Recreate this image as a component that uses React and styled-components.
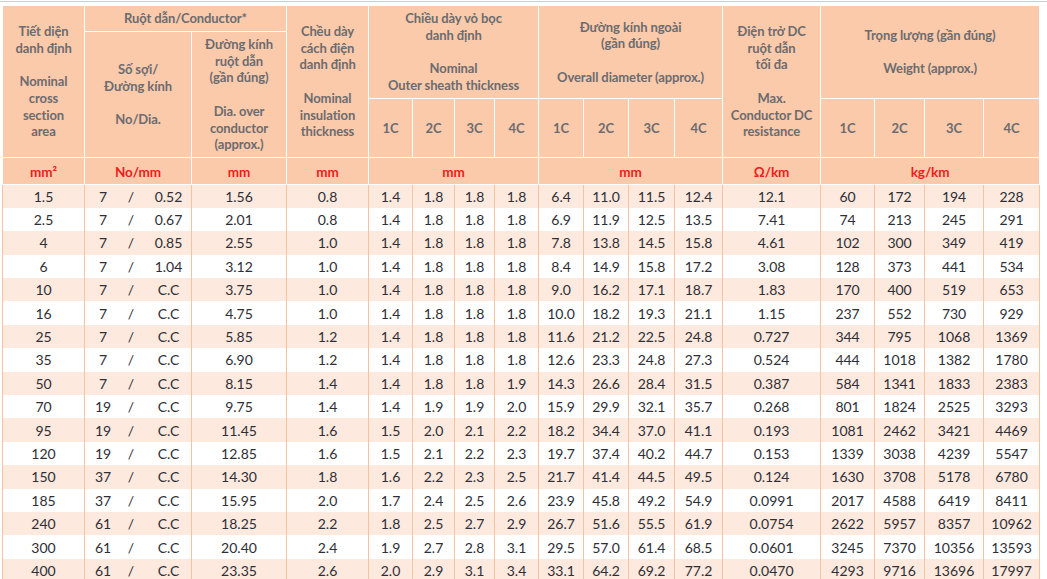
import React from 'react';
import styled, { createGlobalStyle } from 'styled-components';

const GlobalStyle = createGlobalStyle`
  html, body { margin: 0; padding: 0; background: #ffffff; }
  body { font-family: Lato, "Open Sans", "Noto Sans", sans-serif; }
`;

const Page = styled.div`
  width: 1047px;
  height: 579px;
  overflow: hidden;
`;

const TopRule = styled.div`
  height: 1px;
  margin-top: 1px;
  background: #cfcfcf;
`;

const Table = styled.table`
  margin: 3px 0 0 2px;
  border-collapse: collapse;
  table-layout: fixed;
  width: 1038px;
`;

const HeadRow = styled.tr`
  height: ${(p) => p.$h}px;
`;

const Th = styled.th`
  background: #fbcaaa;
  color: #6b6c70;
  font-weight: 700;
  font-size: 13px;
  line-height: 16.7px;
  text-align: center;
  vertical-align: middle;
  border: 1px solid #ffffff;
  padding: 0 2px;
  letter-spacing: -0.1px;
`;

const UnitTh = styled(Th)`
  color: #f01c1c;
  font-size: 13.5px;
  padding-top: 2px;
`;

const BodyRow = styled.tr`
  height: 23.4px;
  background: ${(p) => (p.$shade ? '#fde9dd' : '#ffffff')};
`;

const Td = styled.td`
  padding: 1px 0 0;
  text-align: center;
  vertical-align: middle;
  color: #2e2e36;
  font-size: 14px;
  line-height: 16px;
  border-left: 1px solid #f7c2a0;
  border-right: 1px solid #f7c2a0;
`;

const Pair = styled.div`
  display: grid;
  grid-template-columns: 36px 20px 1fr;
  align-items: center;
`;

const PairPart = styled.span`
  text-align: center;
  padding-left: ${(p) => p.$pad || 0}px;
`;

const widths = [82, 107, 95, 82, 44, 42, 40, 44, 45, 45, 46, 48, 98, 54, 50, 59, 56];

const rows = [
  ['1.5', '7', '0.52', '1.56', '0.8', '1.4', '1.8', '1.8', '1.8', '6.4', '11.0', '11.5', '12.4', '12.1', '60', '172', '194', '228'],
  ['2.5', '7', '0.67', '2.01', '0.8', '1.4', '1.8', '1.8', '1.8', '6.9', '11.9', '12.5', '13.5', '7.41', '74', '213', '245', '291'],
  ['4', '7', '0.85', '2.55', '1.0', '1.4', '1.8', '1.8', '1.8', '7.8', '13.8', '14.5', '15.8', '4.61', '102', '300', '349', '419'],
  ['6', '7', '1.04', '3.12', '1.0', '1.4', '1.8', '1.8', '1.8', '8.4', '14.9', '15.8', '17.2', '3.08', '128', '373', '441', '534'],
  ['10', '7', 'C.C', '3.75', '1.0', '1.4', '1.8', '1.8', '1.8', '9.0', '16.2', '17.1', '18.7', '1.83', '170', '400', '519', '653'],
  ['16', '7', 'C.C', '4.75', '1.0', '1.4', '1.8', '1.8', '1.8', '10.0', '18.2', '19.3', '21.1', '1.15', '237', '552', '730', '929'],
  ['25', '7', 'C.C', '5.85', '1.2', '1.4', '1.8', '1.8', '1.8', '11.6', '21.2', '22.5', '24.8', '0.727', '344', '795', '1068', '1369'],
  ['35', '7', 'C.C', '6.90', '1.2', '1.4', '1.8', '1.8', '1.8', '12.6', '23.3', '24.8', '27.3', '0.524', '444', '1018', '1382', '1780'],
  ['50', '7', 'C.C', '8.15', '1.4', '1.4', '1.8', '1.8', '1.9', '14.3', '26.6', '28.4', '31.5', '0.387', '584', '1341', '1833', '2383'],
  ['70', '19', 'C.C', '9.75', '1.4', '1.4', '1.9', '1.9', '2.0', '15.9', '29.9', '32.1', '35.7', '0.268', '801', '1824', '2525', '3293'],
  ['95', '19', 'C.C', '11.45', '1.6', '1.5', '2.0', '2.1', '2.2', '18.2', '34.4', '37.0', '41.1', '0.193', '1081', '2462', '3421', '4469'],
  ['120', '19', 'C.C', '12.85', '1.6', '1.5', '2.1', '2.2', '2.3', '19.7', '37.4', '40.2', '44.7', '0.153', '1339', '3038', '4239', '5547'],
  ['150', '37', 'C.C', '14.30', '1.8', '1.6', '2.2', '2.3', '2.5', '21.7', '41.4', '44.5', '49.5', '0.124', '1630', '3708', '5178', '6780'],
  ['185', '37', 'C.C', '15.95', '2.0', '1.7', '2.4', '2.5', '2.6', '23.9', '45.8', '49.2', '54.9', '0.0991', '2017', '4588', '6419', '8411'],
  ['240', '61', 'C.C', '18.25', '2.2', '1.8', '2.5', '2.7', '2.9', '26.7', '51.6', '55.5', '61.9', '0.0754', '2622', '5957', '8357', '10962'],
  ['300', '61', 'C.C', '20.40', '2.4', '1.9', '2.7', '2.8', '3.1', '29.5', '57.0', '61.4', '68.5', '0.0601', '3245', '7370', '10356', '13593'],
  ['400', '61', 'C.C', '23.35', '2.6', '2.0', '2.9', '3.1', '3.4', '33.1', '64.2', '69.2', '77.2', '0.0470', '4293', '9716', '13696', '17997'],
];

const cores = ['1C', '2C', '3C', '4C'];
const coreGroups = ['sheath', 'diameter', 'weight'];

export default function App() {
  return (
    <Page>
      <GlobalStyle />
      <TopRule />
      <Table>
        <colgroup>
          {widths.map((w, i) => (
            <col key={i} style={{ width: w }} />
          ))}
        </colgroup>
        <thead>
          <HeadRow $h={26}>
            <Th rowSpan={3}>
              Tiết diện<br />danh định<br /><br />Nominal<br />cross<br />section<br />area
            </Th>
            <Th colSpan={2}>Ruột dẫn/Conductor*</Th>
            <Th rowSpan={3}>
              Chều dày<br />cách điện<br />danh định<br /><br />Nominal<br />insulation<br />thickness
            </Th>
            <Th colSpan={4} rowSpan={2}>
              Chiều dày vỏ bọc<br />danh định<br /><br />Nominal<br />Outer sheath thickness
            </Th>
            <Th colSpan={4} rowSpan={2}>
              Đường kính ngoài<br />(gần đúng)<br /><br />Overall diameter (approx.)
            </Th>
            <Th rowSpan={3}>
              Điện trở DC<br />ruột dẫn<br />tối đa<br /><br />Max.<br />Conductor DC<br />resistance
            </Th>
            <Th colSpan={4} rowSpan={2}>
              Trọng lượng (gần đúng)<br /><br />Weight (approx.)
            </Th>
          </HeadRow>
          <HeadRow $h={67}>
            <Th rowSpan={2}>
              Số sợi/<br />Đường kính<br /><br />No/Dia.
            </Th>
            <Th rowSpan={2}>
              Đường kính<br />ruột dẫn<br />(gần đúng)<br /><br />Dia. over<br />conductor<br />(approx.)
            </Th>
          </HeadRow>
          <HeadRow $h={59}>
            {coreGroups.slice(0, 2).map((g) =>
              cores.map((c) => <Th key={`${g}-${c}`}>{c}</Th>)
            )}
            {cores.map((c) => (
              <Th key={`w-${c}`}>{c}</Th>
            ))}
          </HeadRow>
          <HeadRow $h={27}>
            <UnitTh>mm²</UnitTh>
            <UnitTh>No/mm</UnitTh>
            <UnitTh>mm</UnitTh>
            <UnitTh>mm</UnitTh>
            <UnitTh colSpan={4}>mm</UnitTh>
            <UnitTh colSpan={4}>mm</UnitTh>
            <UnitTh>Ω/km</UnitTh>
            <UnitTh colSpan={4}>kg/km</UnitTh>
          </HeadRow>
        </thead>
        <tbody>
          {rows.map((r, i) => (
            <BodyRow key={r[0]} $shade={i % 2 === 0}>
              <Td>{r[0]}</Td>
              <Td>
                <Pair>
                  <PairPart>{r[1]}</PairPart>
                  <PairPart>/</PairPart>
                  <PairPart $pad={5}>{r[2]}</PairPart>
                </Pair>
              </Td>
              {r.slice(3).map((v, j) => (
                <Td key={j}>{v}</Td>
              ))}
            </BodyRow>
          ))}
        </tbody>
      </Table>
    </Page>
  );
}
